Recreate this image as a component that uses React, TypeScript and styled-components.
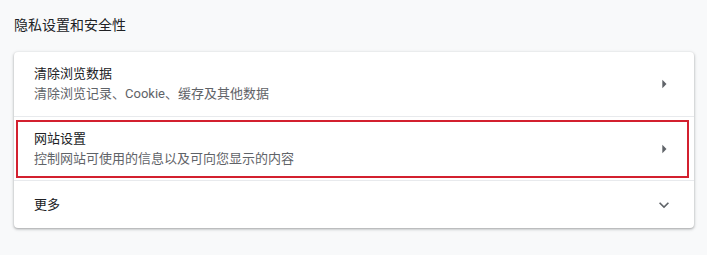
import * as React from 'react'
import styled, { createGlobalStyle } from 'styled-components'

const GlobalStyle = createGlobalStyle`
  html, body {
    margin: 0;
    padding: 0;
    background: #f8f9fa;
  }
  body {
    font-family: Roboto, "Noto Sans CJK SC", sans-serif;
    color: #202124;
  }
`

const Page = styled.div`
  width: 707px;
  height: 255px;
  padding: 15px 13px 0 14px;
  box-sizing: border-box;
  background: #f8f9fa;
`

const SectionTitle = styled.h2`
  margin: 0 0 17px 0;
  font-size: 14px;
  font-weight: 400;
  line-height: 20px;
  color: #202124;
`

const Card = styled.div`
  background: #fff;
  border-radius: 4px;
  box-shadow: 0 1px 2px 0 rgba(60, 64, 67, 0.3), 0 1px 3px 1px rgba(60, 64, 67, 0.15);
  display: flex;
  flex-direction: column;
`

const Row = styled.div<{ $tall?: boolean; $first?: boolean }>`
  position: relative;
  display: flex;
  align-items: center;
  min-height: ${p => (p.$tall ? '64px' : '48px')};
  padding: 0 20px;
  box-sizing: border-box;
  border-top: ${p => (p.$first ? 'none' : '1px solid #e8eaed')};
  cursor: pointer;
`

const Texts = styled.div`
  flex: 1;
  display: flex;
  flex-direction: column;
`

const Label = styled.div`
  font-size: 13px;
  line-height: 20px;
  color: #202124;
`

const Sub = styled.div`
  font-size: 13px;
  line-height: 20px;
  color: #5f6368;
`

const IconBox = styled.div`
  width: 20px;
  height: 20px;
  display: flex;
  align-items: center;
  justify-content: center;
`

const Highlight = styled.div`
  position: absolute;
  left: 2px;
  right: 5px;
  top: 3px;
  bottom: 2px;
  border: 2px solid #d3202f;
  pointer-events: none;
`

const ArrowRight = () => (
  <IconBox>
    <svg width="20" height="20" viewBox="0 0 24 24">
      <path d="M10 17l5-5-5-5v10z" fill="#5f6368" />
    </svg>
  </IconBox>
)

const ExpandMore = () => (
  <IconBox>
    <svg width="20" height="20" viewBox="0 0 24 24">
      <path d="M16.59 8.59L12 13.17 7.41 8.59 6 10l6 6 6-6z" fill="#5f6368" />
    </svg>
  </IconBox>
)

const App = () => {
  return (
    <Page>
      <GlobalStyle />
      <SectionTitle>隐私设置和安全性</SectionTitle>
      <Card>
        <Row $tall $first>
          <Texts>
            <Label>清除浏览数据</Label>
            <Sub>清除浏览记录、Cookie、缓存及其他数据</Sub>
          </Texts>
          <ArrowRight />
        </Row>
        <Row $tall>
          <Highlight />
          <Texts>
            <Label>网站设置</Label>
            <Sub>控制网站可使用的信息以及可向您显示的内容</Sub>
          </Texts>
          <ArrowRight />
        </Row>
        <Row>
          <Texts>
            <Label>更多</Label>
          </Texts>
          <ExpandMore />
        </Row>
      </Card>
    </Page>
  )
}

export default App
